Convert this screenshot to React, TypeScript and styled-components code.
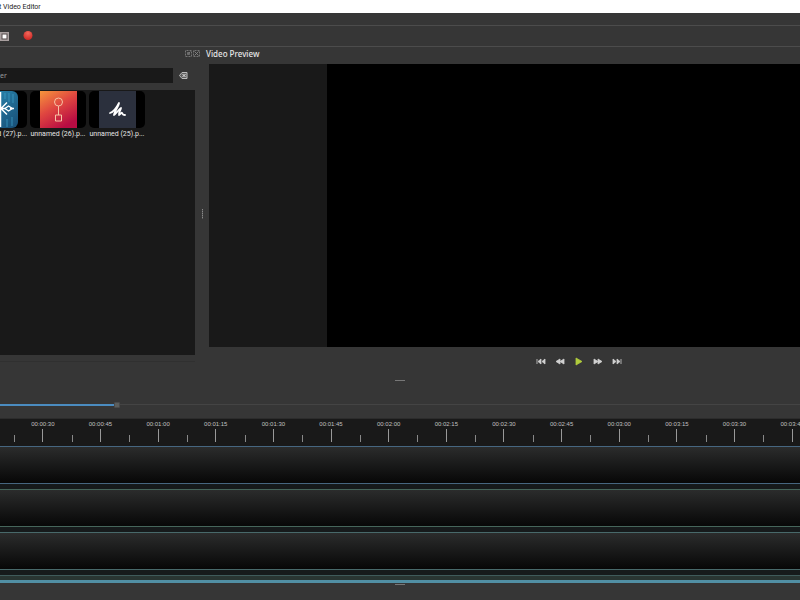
import React from "react";
import styled, { createGlobalStyle } from "styled-components";

const GlobalStyle = createGlobalStyle`
  * { box-sizing: border-box; }
  body {
    margin: 0;
    background: #363636;
    font-family: "Noto Sans", "Open Sans", sans-serif;
    overflow: hidden;
  }
  button { padding: 0; border: 0; background: none; cursor: pointer; }
  svg { display: block; }
`;

const Window = styled.div`
  display: flex;
  flex-direction: column;
  min-height: 100vh;
  overflow: hidden;
  background: #363636;
  color: #e6e6e6;
`;

const TitleBar = styled.header`
  height: 13px;
  background: #ffffff;
  color: #222222;
  font-family: Roboto, "Noto Sans", sans-serif;
  font-size: 7px;
  line-height: 14px;
  white-space: pre;
  margin-left: -1px;
`;

const MenuBar = styled.div`
  height: 13px;
  border-bottom: 1px solid #4c4c4c;
`;

const ToolBar = styled.div`
  display: flex;
  align-items: center;
  gap: 13px;
  height: 21px;
  border-bottom: 1px solid #4c4c4c;
`;

const IconButton = styled.button<{ $width: number }>`
  display: flex;
  align-items: center;
  justify-content: center;
  flex: none;
  width: ${(p) => p.$width}px;
  height: 12px;
`;

const Workspace = styled.main`
  display: flex;
  flex: 1;
`;

const FilesDock = styled.section`
  display: flex;
  flex-direction: column;
  width: 195px;
  flex: none;
`;

const DockButtons = styled.div`
  display: flex;
  justify-content: flex-end;
  align-items: center;
  height: 12px;
  margin-right: -5px;
`;

const FilterRow = styled.div`
  display: flex;
  align-items: center;
  gap: 4px;
  margin-top: 9px;
`;

const FilterInput = styled.input`
  width: 173px;
  height: 15px;
  padding: 0;
  border: 0;
  outline: 0;
  background: #191919;
  color: #b0b0b0;
  font-family: inherit;
  font-size: 7px;
  &::placeholder { color: #999999; opacity: 1; }
`;

const FileList = styled.ul`
  display: flex;
  align-items: flex-start;
  gap: 3px;
  flex: 1;
  margin: 7px 0 0;
  padding: 1px 0 0;
  list-style: none;
  overflow: hidden;
  background: #191919;
`;

const FileItem = styled.li`
  display: flex;
  flex-direction: column;
  flex: none;
  width: 56px;
  &:first-child { margin-left: -29px; }
`;

const Thumb = styled.div`
  display: flex;
  justify-content: center;
  height: 37px;
  border-radius: 5px;
  background: #000000;
  overflow: hidden;
`;

const FileName = styled.span<{ $align: string }>`
  font-family: Roboto, "Noto Sans", sans-serif;
  font-size: 7px;
  line-height: 13px;
  text-align: ${(p) => p.$align};
  white-space: nowrap;
`;

const DockFooter = styled.div`
  height: 7px;
  border-bottom: 1px solid #303030;
`;

const DockSpacer = styled.div`
  height: 14px;
`;

const Splitter = styled.div`
  display: flex;
  align-items: center;
  justify-content: center;
  width: 14px;
  padding: 5px 0 0 1px;
  flex: none;
`;

const VerticalGrip = styled.span`
  width: 1px;
  height: 10px;
  background: repeating-linear-gradient(#8a8a8a 0 1px, #5a5a5a 1px 2px);
`;

/* The preview dock runs on past the right edge of the window. */
const PreviewDock = styled.section`
  display: flex;
  flex-direction: column;
  flex: 1;
  margin-right: -148px;
`;

const DockTitle = styled.h2`
  height: 17px;
  margin: 0 0 0 -3px;
  font-size: 8px;
  font-weight: 500;
  line-height: 13px;
`;

const Stage = styled.div`
  display: flex;
  flex: 1;
  padding: 0 118px;
  background: #191919;
`;

const Video = styled.div`
  flex: 1;
  background: #000000;
`;

const Controls = styled.div`
  display: flex;
  justify-content: center;
  align-items: center;
  gap: 7px;
  height: 29px;
`;

const HorizontalSplitter = styled.div`
  display: flex;
  justify-content: center;
  align-items: center;
  height: 9px;
`;

const HorizontalGrip = styled.span`
  width: 10px;
  height: 1px;
  background: #777777;
`;

const ZoomRow = styled.div`
  display: flex;
  height: 34px;
  padding-top: 16px;
  border-bottom: 1px solid #2c2c2c;
`;

const ZoomSlider = styled.input`
  appearance: none;
  width: 100%;
  height: 7px;
  margin: 0;
  background: linear-gradient(#4b8cc0, #4b8cc0) 0 3px / 114px 2px no-repeat,
    linear-gradient(#444444, #444444) 0 3px / 100% 1px no-repeat;
  &::-webkit-slider-thumb {
    appearance: none;
    width: 6px;
    height: 6px;
    border-radius: 1px;
    border: 1px solid #4a4a4a;
    background: #5c5e5c;
  }
`;

const Ruler = styled.div`
  height: 27px;
  overflow: hidden;
  background: #191919;
`;

const RulerScale = styled.div`
  display: grid;
  grid-template-columns: repeat(14, 1fr);
  height: 23px;
  margin: 0 -21px 0 14px;
`;

const RulerCell = styled.div`
  display: grid;
  grid-template-columns: 1fr 1px 1fr;
  grid-template-rows: 10px 13px;
  align-items: end;
`;

const TimeLabel = styled.span`
  grid-column: 1 / 4;
  align-self: start;
  font-family: "Liberation Sans", sans-serif;
  font-size: 6px;
  line-height: 10px;
  text-align: center;
  color: #c0c0c0;
`;

const Tick = styled.span<{ $major?: boolean }>`
  width: 1px;
  height: ${(p) => (p.$major ? 13 : 7)}px;
  background: ${(p) => (p.$major ? "#999999" : "#888888")};
`;

const Tracks = styled.section`
  display: flex;
  flex-direction: column;
  gap: 5px;
  background: #161a1b;
`;

const Track = styled.div<{ $edge: string }>`
  height: 38px;
  border-top: 1px solid ${(p) => p.$edge};
  border-bottom: 1px solid ${(p) => p.$edge};
  background: linear-gradient(#2b2c2c, #070707);
`;

const TrackFoot = styled.div`
  height: 8px;
  border-top: 1px solid #3f5a5a;
  border-bottom: 3px solid #518fa4;
  background: #293532;
`;

const Footer = styled.footer`
  display: flex;
  justify-content: center;
  align-items: flex-start;
  height: 17px;
  padding-top: 1px;
`;

const FullScreenIcon = () => (
  <svg width="10" height="9" viewBox="0 0 10 9">
    <rect x="0" y="0" width="9" height="9" fill="#a9a0a0" />
    <rect x="2" y="2" width="5" height="5" fill="#ffffff" stroke="#544b4b" />
  </svg>
);

const RecordIcon = () => (
  <svg width="10" height="10" viewBox="0 0 10 10">
    <defs>
      <radialGradient id="record" cx=".5" cy=".25" r=".7">
        <stop offset="0" stopColor="#f2685c" />
        <stop offset="1" stopColor="#cf2a26" />
      </radialGradient>
    </defs>
    <circle cx="5" cy="4.500" r="4.500" fill="url(#record)" />
  </svg>
);

const FloatIcon = () => (
  <svg width="7" height="7" viewBox="0 0 7 7" fill="none" stroke="#858585">
    <rect x=".5" y=".5" width="6" height="6" strokeDasharray="1 .5" strokeWidth=".8" />
    <path d="M2.500 2.500h2v2h-2zM3 4l2.500-2.500" strokeWidth=".7" />
  </svg>
);

const CloseIcon = () => (
  <svg width="7" height="7" viewBox="0 0 7 7" fill="none" stroke="#858585">
    <rect x=".5" y=".5" width="6" height="6" strokeDasharray="1 .5" strokeWidth=".8" />
    <path d="M1.500 1.500l4 4M5.500 1.500l-4 4" strokeWidth=".9" />
  </svg>
);

const ClearIcon = () => (
  <svg width="9" height="7" viewBox="0 0 9 7">
    <path d="M3 .5h5v6H3L.5 3.500z" fill="#606060" stroke="#bdbdbd" />
    <path d="M3.500 2l3 3M6.500 2l-3 3" stroke="#e6e6e6" />
  </svg>
);

const AppTileIcon = () => (
  <svg width="37" height="37" viewBox="0 0 37 37">
    <defs>
      <linearGradient id="blue" x1="0" y1="0" x2="1" y2="1">
        <stop offset="0" stopColor="#2d91b9" />
        <stop offset="1" stopColor="#174d75" />
      </linearGradient>
    </defs>
    <rect width="37" height="37" rx="6" fill="url(#blue)" />
    <path d="M28 2v9M32 3v9M24 2v6M26 28v8M31 26v9" stroke="#3c9cc4" strokeWidth=".8" />
    <g fill="none" stroke="#ffffff" strokeWidth="1.500">
      <path d="M19.500 1v35M5 17.500h20M20 17.500l6-6M20 17.500l6 6M29 17.500h4" />
      <path d="M24 17.500l3.500-2.500 4 2.500-4 2.500z" strokeWidth="1.200" />
    </g>
  </svg>
);

const GradientTileIcon = () => (
  <svg width="37" height="37" viewBox="0 0 37 37">
    <defs>
      <linearGradient id="sunset" x1="0" y1="0" x2=".6" y2="1">
        <stop offset="0" stopColor="#f6953c" />
        <stop offset=".5" stopColor="#df4640" />
        <stop offset="1" stopColor="#b80c43" />
      </linearGradient>
    </defs>
    <rect width="37" height="37" fill="url(#sunset)" />
    <g fill="none" stroke="#f6c3a4">
      <circle cx="18.500" cy="11" r="4" />
      <path d="M18.500 15v9M15.500 24h6v6h-6z" />
    </g>
  </svg>
);

const SignatureTileIcon = () => (
  <svg width="37" height="37" viewBox="0 0 37 37">
    <rect width="37" height="37" fill="#2b303d" />
    <path
      d="M11 22c3-1 7-6 9-10 0 3-5 9-5 12 2-1 5-6 7-7 0 2-3 5-2 7 1 0 2-3 3-2s0 2 3 2"
      fill="none"
      stroke="#ffffff"
      strokeWidth="1.800"
      strokeLinecap="round"
      strokeLinejoin="round"
    />
  </svg>
);

const transport = [
  { label: "Jump to start", path: "M2 2v5M6 2v5L3 4.500zM10 2v5L7 4.500z", color: "#d0d0d0" },
  { label: "Rewind", path: "M6 2v5L2 4.500zM10 2v5L6 4.500z", color: "#d0d0d0" },
  { label: "Play", path: "M3 1v7l6-3.500z", color: "#b0cc3c" },
  { label: "Fast forward", path: "M2 2v5l4-2.500zM6 2v5l4-2.500z", color: "#d0d0d0" },
  { label: "Jump to end", path: "M2 2v5l3-2.500zM6 2v5l3-2.500zM10 2v5", color: "#d0d0d0" },
];

const files = [
  { name: "d (27).p...", align: "right", icon: <AppTileIcon /> },
  { name: "unnamed (26).p...", align: "center", icon: <GradientTileIcon /> },
  { name: "unnamed (25).p...", align: "center", icon: <SignatureTileIcon /> },
];

const times = Array.from({ length: 14 }, (_, i) => {
  const seconds = 30 + i * 15;
  const pad = (n: number) => String(n).padStart(2, "0");
  return `00:${pad(Math.floor(seconds / 60))}:${pad(seconds % 60)}`;
});

const trackEdges = ["#466680", "#45655a", "#48696a"];

export default function App() {
  return (
    <Window>
      <GlobalStyle />
      <TitleBar>t Video Editor</TitleBar>
      <MenuBar />
      <ToolBar>
        <IconButton $width={10} aria-label="Full screen"><FullScreenIcon /></IconButton>
        <IconButton $width={10} aria-label="Export video"><RecordIcon /></IconButton>
      </ToolBar>

      <Workspace>
        <FilesDock>
          <DockButtons>
            <IconButton $width={8} aria-label="Float panel"><FloatIcon /></IconButton>
            <IconButton $width={8} aria-label="Close panel"><CloseIcon /></IconButton>
          </DockButtons>
          <FilterRow>
            <FilterInput aria-label="Filter" placeholder="er" />
            <IconButton $width={12} aria-label="Clear filter"><ClearIcon /></IconButton>
          </FilterRow>
          <FileList>
            {files.map((file) => (
              <FileItem key={file.name}>
                <Thumb>{file.icon}</Thumb>
                <FileName $align={file.align}>{file.name}</FileName>
              </FileItem>
            ))}
          </FileList>
          <DockFooter />
          <DockSpacer />
        </FilesDock>
        <Splitter><VerticalGrip /></Splitter>
        <PreviewDock>
          <DockTitle>Video Preview</DockTitle>
          <Stage><Video /></Stage>
          <Controls>
            {transport.map((item) => (
              <IconButton key={item.label} $width={12} aria-label={item.label}>
                <svg width="12" height="9" viewBox="0 0 12 9">
                  <path d={item.path} fill={item.color} stroke={item.color} strokeWidth=".8" />
                </svg>
              </IconButton>
            ))}
          </Controls>
        </PreviewDock>
      </Workspace>

      <HorizontalSplitter><HorizontalGrip /></HorizontalSplitter>
      <ZoomRow>
        <ZoomSlider type="range" aria-label="Timeline zoom" min={0} max={800} defaultValue={115} />
      </ZoomRow>
      <Ruler>
        <RulerScale>
          {times.map((time) => (
            <RulerCell key={time}>
              <TimeLabel>{time}</TimeLabel>
              <Tick />
              <Tick $major />
            </RulerCell>
          ))}
        </RulerScale>
      </Ruler>
      <Tracks>
        {trackEdges.map((edge) => <Track key={edge} $edge={edge} />)}
        <TrackFoot />
      </Tracks>
      <Footer><HorizontalGrip /></Footer>
    </Window>
  );
}
